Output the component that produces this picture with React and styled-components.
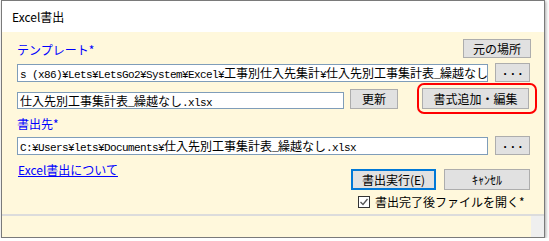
import React from 'react';
import styled, { createGlobalStyle } from 'styled-components';

const UI = `"Noto Sans CJK JP", "Noto Sans", sans-serif`;

const Global = createGlobalStyle`
  html, body { margin: 0; padding: 0; background: #ffffff; }
  body { font-family: ${UI}; color: #000; }
  * { box-sizing: border-box; }
`;

const Window = styled.div`
  margin-left: 1px;
  width: 544px;
  height: 238px;
  border: 1px solid #7a7a7a;
  box-shadow: 1px 1px 3px rgba(0, 0, 0, 0.35);
  display: flex;
  flex-direction: column;
  background: #fff8dc;
`;

const TitleBar = styled.div`
  height: 31px;
  flex: none;
  background: #ffffff;
  display: flex;
  align-items: center;
  padding-left: 10px;
  font-size: 12px;
  line-height: 16px;
`;

const Content = styled.div`
  flex: 1;
  display: flex;
  flex-direction: column;
  padding: 7px 13px 0 15px;
`;

const Row = styled.div`
  display: flex;
  align-items: ${(p) => p.$align || 'center'};
  justify-content: ${(p) => p.$justify || 'flex-start'};
  height: ${(p) => p.$h}px;
  margin-top: ${(p) => p.$mt || 0}px;
  gap: ${(p) => p.$gap || 0}px;
  flex: none;
`;

const Label = styled.div`
  color: #0000ff;
  font-size: 12px;
  line-height: 16px;
  height: 16px;
`;

const Button = styled.div`
  width: ${(p) => p.$w}px;
  height: ${(p) => p.$h || 19}px;
  margin-left: ${(p) => p.$ml || 0}px;
  flex: none;
  background: #e1e1e1;
  border: ${(p) => (p.$default ? '2px solid #0078d7' : '1px solid #adadad')};
  display: flex;
  align-items: center;
  justify-content: center;
  font-size: 12px;
  line-height: 14px;
  color: #000;
  white-space: nowrap;
`;

const Dots = styled.span`
  font-family: "Liberation Mono", monospace;
  font-weight: bold;
  font-size: 12px;
  letter-spacing: 0.5px;
  margin-top: -2px;
  padding-left: 1px;
`;

const TextBox = styled.div`
  width: ${(p) => p.$w}px;
  height: ${(p) => p.$h || 18}px;
  align-self: ${(p) => p.$self || 'auto'};
  margin-bottom: ${(p) => p.$mb || 0}px;
  flex: none;
  background: #ffffff;
  border: 1px solid #7f9db9;
  padding: 0 2px;
  overflow: hidden;
  white-space: nowrap;
  font-family: "Noto Sans CJK JP", sans-serif;
  font-size: 12px;
  line-height: 16px;
  color: #000;
`;

const Half = styled.span`
  font-family: "Liberation Mono", monospace;
  font-size: 11px;
  letter-spacing: -0.6px;
`;

const Highlight = styled.div`
  position: relative;
  margin-left: 24px;
  flex: none;
  &::after {
    content: '';
    position: absolute;
    left: -5px;
    right: -8px;
    top: -5px;
    bottom: -5px;
    border: 2px solid #ff0000;
    border-radius: 7px;
    pointer-events: none;
  }
`;

const Bottom = styled.div`
  display: flex;
  justify-content: space-between;
  margin-top: 8px;
  padding-right: 1px;
`;

const Link = styled.a`
  color: #0000ff;
  text-decoration: underline;
  font-size: 12px;
  line-height: 14px;
  height: 14px;
  margin-left: 1px;
  cursor: pointer;
`;

const ActionColumn = styled.div`
  display: flex;
  flex-direction: column;
  margin-top: 6px;
`;

const CheckRow = styled.label`
  display: flex;
  align-items: center;
  gap: 5px;
  margin-top: 5px;
  padding-left: 7px;
  height: 13px;
  font-size: 12px;
  line-height: 13px;
`;

const Separator = styled.div`
  height: 2px;
  flex: none;
  background: #dcdcdc;
`;

const Status = styled.div`
  height: 21px;
  flex: none;
  display: flex;
  justify-content: flex-end;
`;

const Grip = styled.div`
  width: 13px;
  background: #efefef;
`;

function Mono({ text }) {
  const parts = [];
  const re = /[\x20-\x7E\u00A5]+/g;
  let last = 0;
  let m;
  let k = 0;
  while ((m = re.exec(text))) {
    if (m.index > last) parts.push(<span key={k++}>{text.slice(last, m.index)}</span>);
    parts.push(<Half key={k++}>{m[0].replace(/ /g, '\u00A0')}</Half>);
    last = m.index + m[0].length;
  }
  if (last < text.length) parts.push(<span key={k++}>{text.slice(last)}</span>);
  return <>{parts}</>;
}

function CheckBox() {
  return (
    <svg width="12" height="12" viewBox="0 0 12 12">
      <rect x="0.5" y="0.5" width="11" height="11" fill="#fff" stroke="#333" />
      <path d="M2.5 6 L5 8.5 L9.5 3" fill="none" stroke="#555" strokeWidth="1.3" />
    </svg>
  );
}

export default function App() {
  return (
    <>
      <Global />
      <Window>
        <TitleBar>Excel書出</TitleBar>
        <Content>
          <Row $h={19} $justify="space-between" $align="flex-end">
            <Label>テンプレート*</Label>
            <Button $w={68}>元の場所</Button>
          </Row>
          <Row $h={19} $mt={5} $gap={7}>
            <TextBox $w={471}>
              <Mono text="s (x86)¥Lets¥LetsGo2¥System¥Excel¥工事別仕入先集計¥仕入先別工事集計表_繰越なし" />
            </TextBox>
            <Button $w={35}><Dots>...</Dots></Button>
          </Row>
          <Row $h={21} $mt={6}>
            <TextBox $w={327} $h={17} $self="flex-end">
              <Mono text="仕入先別工事集計表_繰越なし.xlsx" />
            </TextBox>
            <Button $w={48} $h={20} $ml={6}>更新</Button>
            <Highlight>
              <Button $w={107} $h={21}>書式追加・編集</Button>
            </Highlight>
          </Row>
          <Row $h={16} $mt={7}>
            <Label>書出先*</Label>
          </Row>
          <Row $h={19} $mt={4} $gap={7}>
            <TextBox $w={471}>
              <Mono text="C:¥Users¥lets¥Documents¥仕入先別工事集計表_繰越なし.xlsx" />
            </TextBox>
            <Button $w={35}><Dots>...</Dots></Button>
          </Row>
          <Bottom>
            <Link>Excel書出について</Link>
            <ActionColumn>
              <Row $h={21} $gap={8}>
                <Button $w={85} $h={21} $default>書出実行(E)</Button>
                <Button $w={86} $h={21}>ｷｬﾝｾﾙ</Button>
              </Row>
              <CheckRow>
                <CheckBox />
                書出完了後ファイルを開く*
              </CheckRow>
            </ActionColumn>
          </Bottom>
        </Content>
        <Separator />
        <Status>
          <Grip />
        </Status>
      </Window>
    </>
  );
}
